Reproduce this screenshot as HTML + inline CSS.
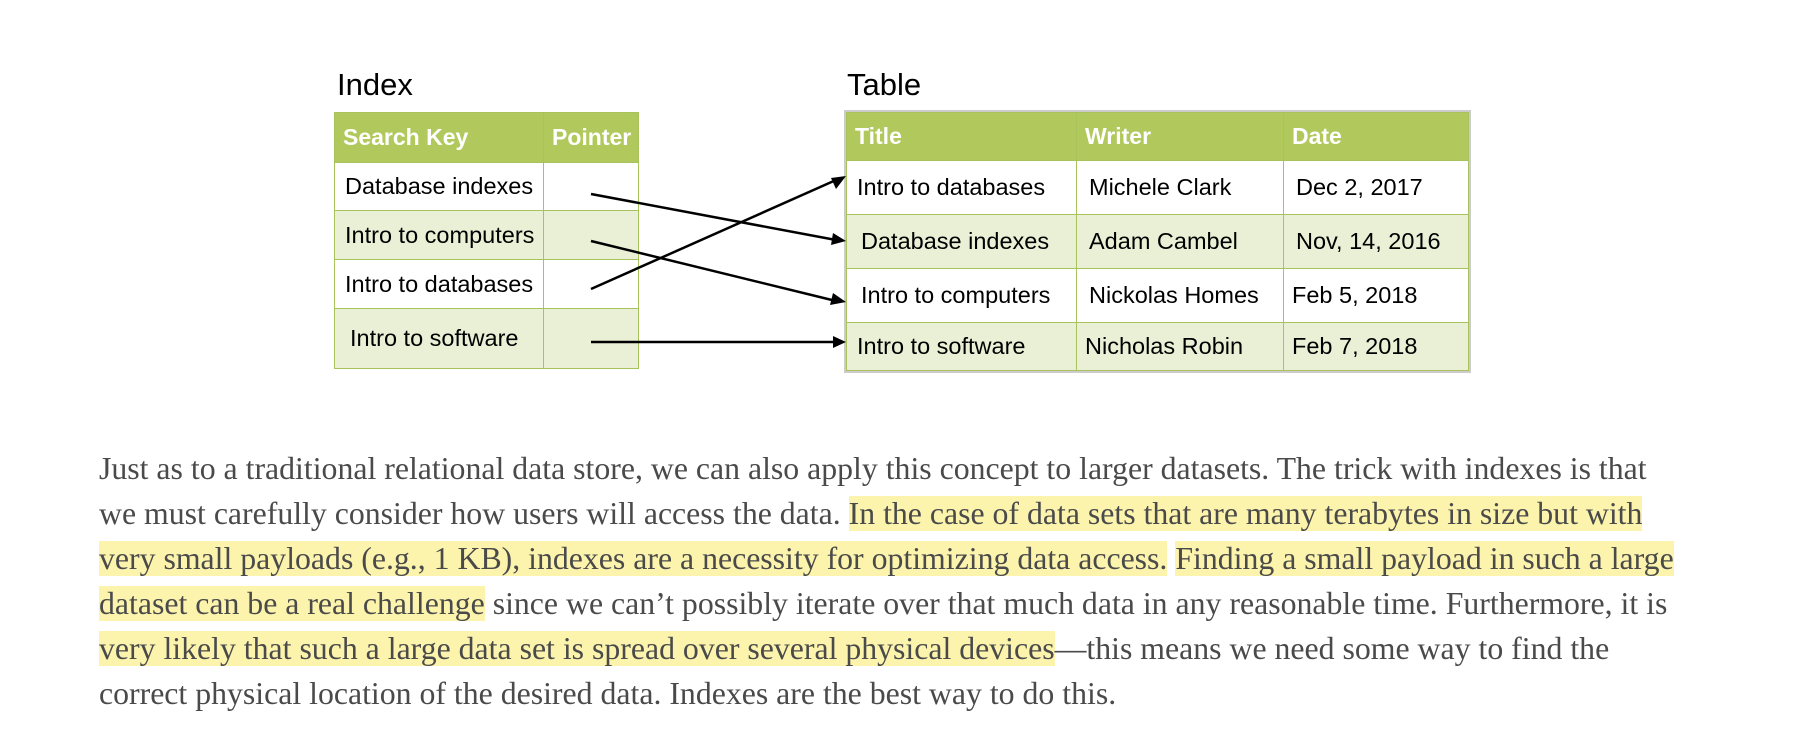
<!DOCTYPE html>
<html><head><meta charset="utf-8"><style>
body{margin:0;width:1800px;height:746px;background:#fff;position:relative;overflow:hidden;font-family:"Liberation Sans",sans-serif}
.lbl{position:absolute;font-size:31px;color:#000}
table{position:absolute;border-collapse:collapse;font-size:23.5px;color:#000;table-layout:fixed}
td{border:1.5px solid #a9c35c;padding:0 0 0 10px;white-space:nowrap;overflow:hidden}
th{background:#b1c95c;color:#fff;text-align:left;font-weight:bold;border:1.5px solid #a9c35c;padding:0 0 0 8px;font-size:23px}
tr.a td{background:#eaf0d6}
tr.w td{background:#fff}
.p{position:absolute;left:99px;top:446px;font-family:"Liberation Serif",serif;font-size:31.8px;line-height:45px;color:#4a4a4a;white-space:nowrap}
.h{background:#fcf4ad}
</style></head><body>
<div class="lbl" style="left:337px;top:67px">Index</div>
<div class="lbl" style="left:847px;top:67px">Table</div>
<table style="left:334px;top:112px;width:305px;height:256px;border:1.5px solid #c0504d;border-radius:0 0 0 10px">
<tr style="height:50px"><th style="width:200px">Search Key</th><th>Pointer</th></tr>
<tr class="w" style="height:48px"><td>Database indexes</td><td></td></tr>
<tr class="a" style="height:49px"><td>Intro to computers</td><td></td></tr>
<tr class="w" style="height:49px"><td>Intro to databases</td><td></td></tr>
<tr class="a" style="height:60px"><td style="padding-left:15px">Intro to software</td><td></td></tr>
</table>
<table style="left:846px;top:112px;width:623px;height:258px;outline:2px solid #ccc">
<tr style="height:48px"><th style="width:221px">Title</th><th style="width:198px">Writer</th><th>Date</th></tr>
<tr class="w" style="height:54px"><td>Intro to databases</td><td style="padding-left:12px">Michele Clark</td><td style="padding-left:12px">Dec 2, 2017</td></tr>
<tr class="a" style="height:54px"><td style="padding-left:14px">Database indexes</td><td style="padding-left:12px">Adam Cambel</td><td style="padding-left:12px">Nov, 14, 2016</td></tr>
<tr class="w" style="height:54px"><td style="padding-left:14px">Intro to computers</td><td style="padding-left:12px">Nickolas Homes</td><td style="padding-left:8px">Feb 5, 2018</td></tr>
<tr class="a" style="height:48px"><td>Intro to software</td><td style="padding-left:8px">Nicholas Robin</td><td style="padding-left:8px">Feb 7, 2018</td></tr>
</table>
<svg style="position:absolute;left:0;top:0" width="1800" height="746">
<g stroke="#000" stroke-width="2.5" fill="none">
<line x1="591" y1="194" x2="836" y2="240"/>
<line x1="591" y1="241" x2="836" y2="301"/>
<line x1="591" y1="289" x2="836" y2="180"/>
<line x1="591" y1="342" x2="836" y2="342"/>
</g>
<g fill="#000">
<path d="M846,241 l-13,-8 l-2,12 z"/>
<path d="M846,302 l-13,-9 l-3,12 z"/>
<path d="M846,176 l-15,2 l5,11 z"/>
<path d="M846,342 l-13,-6 l0,12 z"/>
</g>
</svg>
<div class="p">Just as to a traditional relational data store, we can also apply this concept to larger datasets. The trick with indexes is that<br>we must carefully consider how users will access the data. <span class="h">In the case of data sets that are many terabytes in size but with</span><br><span class="h">very small payloads (e.g., 1 KB), indexes are a necessity for optimizing data access.</span> <span class="h">Finding a small payload in such a large</span><br><span class="h">dataset can be a real challenge</span> since we can’t possibly iterate over that much data in any reasonable time. Furthermore, it is<br><span class="h">very likely that such a large data set is spread over several physical devices</span>—this means we need some way to find the<br>correct physical location of the desired data. Indexes are the best way to do this.</div>
</body></html>
